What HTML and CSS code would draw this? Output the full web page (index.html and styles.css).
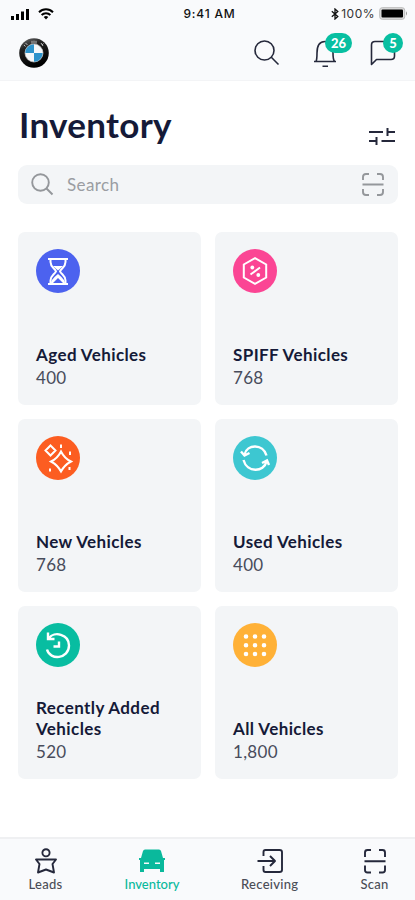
FILE: index.html
```html
<!DOCTYPE html>
<html lang="en">
<head>
    <meta charset="UTF-8">
    <meta name="viewport" content="width=device-width, initial-scale=1.0">
    <title>Inventory</title>
    <link rel="stylesheet" href="styles.css">
</head>
<body>
    <header class="header">
        <div class="status">
            <div class="signal">
                <svg width="19" height="12" viewBox="0 0 19 12"><path d="M0 8h3v4H0zM5 6h3v6H5zM10 3.500h3V12h-3zM15 1h3v11h-3z"/></svg>
                <svg width="16" height="12" viewBox="0 0 16 12" fill="none" stroke="#000" stroke-width="2"><path d="M1 4.200a10 10 0 0 1 14 0M3.600 7a6.300 6.300 0 0 1 8.800 0"/><path d="M5.700 9a3.400 3.400 0 0 1 4.600 0L8 11.500z" fill="#000" stroke="none"/></svg>
            </div>
            <span class="clock">9:41 AM</span>
            <div class="battery">
                <svg width="8" height="12" viewBox="0 0 8 12" fill="none" stroke="#111" stroke-width="1.300"><path d="M.8 3.200l6 5.300L4 11V1l2.800 2.500-6 5.300"/></svg>
                <span>100%</span>
                <svg class="cell" width="29" height="13" viewBox="0 0 29 13"><rect x=".7" y=".7" width="25" height="11.600" rx="2.500" fill="#ddd" stroke="#bbb"/><rect x="2.500" y="2.500" width="21.500" height="8" rx="1" fill="#000"/><path d="M27 4.300q2 2.200 0 4.400z" fill="#999"/></svg>
            </div>
        </div>
        <div class="toolbar">
            <svg class="logo" width="30" height="30" viewBox="0 0 30 30">
                <defs><linearGradient id="ring" x1="0" y1="0" x2=".4" y2="1"><stop offset="0" stop-color="#777"/><stop offset=".35" stop-color="#222"/><stop offset="1" stop-color="#000"/></linearGradient></defs>
                <circle cx="15" cy="15" r="14.800" fill="url(#ring)"/>
                <path d="M5 7l1.500 1.500M6.500 5l2 2M13 2.800v3M15 2.600v3M17 2.800v3M22 5l2 3M24.500 5.500L23 7" stroke="#bbb" stroke-width="1"/>
                <circle cx="15" cy="15" r="9" fill="#f5f8fa" stroke="#ccc" stroke-width=".7"/>
                <path d="M15 15V6.300A8.700 8.700 0 0 0 6.300 15zM15 15v8.700a8.700 8.700 0 0 0 8.700-8.700z" fill="#2d93cb"/>
            </svg>
            <div class="actions">
                <button class="action"><svg width="26" height="26" viewBox="0 0 26 26"><circle cx="10.500" cy="10.500" r="9.500"/><path d="M17.300 17.300l7.200 7.200"/></svg></button>
                <button class="action">
                    <svg width="26" height="28" viewBox="0 0 26 28"><path d="M2 22.500h22M4 22.500c1-2 1-4 1-8.500 0-7 2-11.500 8-11.500s8 4.500 8 11.500c0 4.500 0 6.500 1.500 8.500M10.500 27.200h5.500"/></svg>
                    <span class="badge wide">26</span>
                </button>
                <button class="action">
                    <svg width="26" height="26" viewBox="0 0 26 26"><path d="M1.500 24.500V5q0-3.500 3.500-3.500h16q3.500 0 3.500 3.500v11q0 3.500-3.500 3.500H6.500z"/></svg>
                    <span class="badge">5</span>
                </button>
            </div>
        </div>
    </header>

    <main class="content">
        <div class="title">
            <h1>Inventory</h1>
            <svg width="28" height="18" viewBox="0 0 28 18"><path d="M1 5h14M19.500 1v8M19.500 5H27M1 14h7.500M8.500 10v8M13.500 14H27"/></svg>
        </div>
        <div class="search">
            <svg width="23" height="23" viewBox="0 0 23 23"><circle cx="9.500" cy="9.500" r="8.300"/><path d="M15.500 15.500l6 6"/></svg>
            <span>Search</span>
            <svg class="scan" width="24" height="25" viewBox="0 0 24 25"><path d="M2 8V5q0-3 3-3h3M16 2h3q3 0 3 3v3M2 17v3q0 3 3 3h3M16 23h3q3 0 3-3v-3M1.500 12.500h21"/></svg>
        </div>

        <section class="cards">
            <div class="card">
                <span class="icon blue"><svg viewBox="0 0 44 44"><path d="M12 10h20M12 35h20M14.500 10v3c0 5 4 6 5.500 9.300-1.500 3.200-5.500 4.200-5.500 9.200v3M29.500 10v3c0 5-4 6-5.500 9.300 1.500 3.200 5.500 4.200 5.500 9.200v3"/><path class="fill" d="M17 17h10l-5 4.500zM15 34c.5-4 4-6 7-9 3 3 6.500 5 7 9h-2l-5-5-5 5z"/></svg></span>
                <h2>Aged Vehicles</h2>
                <p>400</p>
            </div>
            <div class="card">
                <span class="icon pink"><svg viewBox="0 0 44 44"><path d="M22 9.200l11.200 6.300v13L22 34.800l-11.200-6.300v-13zM17.500 25.500l9.500-7"/><circle class="fill" cx="19.300" cy="18.500" r="1.900"/><circle class="fill" cx="25.300" cy="26" r="1.900"/></svg></span>
                <h2>SPIFF Vehicles</h2>
                <p>768</p>
            </div>
            <div class="card">
                <span class="icon orange"><svg viewBox="0 0 44 44"><path d="M25 15.500q3.500 7 10 10-6.500 3.500-10 10-3.500-6.500-10-10 6.500-3 10-10zM14.500 9.500l5 5-5 5-5-5zM25 8.500v3.500M34 15.500v3.500M14 32.500v3M33.500 31v3"/></svg></span>
                <h2>New Vehicles</h2>
                <p>768</p>
            </div>
            <div class="card">
                <span class="icon cyan"><svg viewBox="0 0 44 44"><path class="bold" d="M11.500 18.500C14 8 30 7.500 33.500 19.500M33.500 25.500C31 36.500 14 37 10.500 24M8 15.500l3.500 4 5-2.500M36 29l-2-4.500-5 2.500"/></svg></span>
                <h2>Used Vehicles</h2>
                <p>400</p>
            </div>
            <div class="card">
                <span class="icon green"><svg viewBox="0 0 44 44"><path class="bold" d="M11 26.500C14 38 33 36 33 22.500 33 11 18 8 13 15M12 9.500V16h6.500M23 18.500v5h-5.500"/></svg></span>
                <h2>Recently Added Vehicles</h2>
                <p>520</p>
            </div>
            <div class="card">
                <span class="icon yellow"><svg viewBox="0 0 44 44"><path class="dots" d="M13 13.500h.01M22 13.500h.01M31 13.500h.01M13 22.200h.01M22 22.200h.01M31 22.200h.01M13 31h.01M22 31h.01M31 31h.01"/></svg></span>
                <h2>All Vehicles</h2>
                <p>1,800</p>
            </div>
        </section>
    </main>

    <nav class="tabs">
        <a class="tab leads">
            <svg width="24" height="26" viewBox="0 0 24 26"><circle cx="12" cy="4.800" r="3.600"/><path d="M2 11.500h20l-3.500 4.500 1.500 8.500-8-3-8 3L5.500 16z"/></svg>
            <span>Leads</span>
        </a>
        <a class="tab inventory active">
            <svg width="26" height="26" viewBox="0 0 26 26"><path fill-rule="evenodd" d="M6 1.500h14q1.500 0 2 1.500l2 7h2v2h-1v12h-4v-3H5v3H1V12H0v-2h2l2-7q.5-1.500 2-1.500zM5 14.500V16h5v-1.500zM16 14.500V16h5v-1.500z"/></svg>
            <span>Inventory</span>
        </a>
        <a class="tab receiving">
            <svg width="26" height="26" viewBox="0 0 26 26"><path d="M6.500 8V4q0-2 2-2h14q2.500 0 2.500 2v18q0 2-2.500 2h-14q-2 0-2-2v-4M.5 13h17M13 8l5 5-5 5"/></svg>
            <span>Receiving</span>
        </a>
        <a class="tab scanner">
            <svg width="24" height="26" viewBox="0 0 24 26"><path d="M2 9V4.500q0-2.500 2.500-2.500H8M16 2h3.500Q22 2 22 4.500V9M2 17.500V22q0 2.500 2.500 2.500H8M16 24.500h3.500q2.500 0 2.500-2.500v-4.500M1.500 13.200h21"/></svg>
            <span>Scan</span>
        </a>
    </nav>
</body>
</html>
```
FILE: styles.css
```css
*{box-sizing: border-box;}
body,h1,h2,p,button{margin: 0; padding: 0;}
body{
    height: 900px; overflow: hidden; display: flex; flex-direction: column;
    background: #fff; color: #151a38; font-family: Lato, "Noto Sans", sans-serif;
}
button{border: none; background: transparent; font-family: inherit;}
svg{display: block; flex: none;}

.header{height: 81px; background: #f9fafc; border-bottom: 1px solid #f3f4f6;}
.status{
    height: 26px; padding: 1px 7px 0 11px;
    display: grid; grid-template-columns: 1fr auto 1fr; align-items: center;
    font-family: Inter, sans-serif; font-size: 12px; color: #111;
}
.signal{display: flex; gap: 8px;}
.clock{font-weight: 500; letter-spacing: .8px;}
.battery{display: flex; align-items: center; justify-content: flex-end;}
.battery>span{margin: 0 4px 0 2px; letter-spacing: .5px; color: #333;}
.toolbar{
    height: 54px; padding: 0 19px;
    display: flex; justify-content: space-between; align-items: center;
}
.actions{display: flex; gap: 32px;}
.action{position: relative; height: 28px;}
.action>svg,.title>svg,.search>svg,.tab>svg{fill: none; stroke: #25283b; stroke-width: 1.6; stroke-linejoin: round;}
.badge{
    position: absolute; left: 13px; top: -6px; height: 20px; min-width: 20px; border-radius: 10px;
    background: #08bfa1; color: #fff; font-size: 13px; line-height: 20px; font-weight: 900; text-align: center;
}
.badge.wide{width: 27px;}

.content{flex: 1; padding: 0 17px 0 18px;}
.title{height: 84px; display: flex; justify-content: space-between; padding: 22px 2px 0 1px;}
.title h1{font-size: 35px; line-height: 42px; font-weight: 700; letter-spacing: .3px;}
.title>svg{margin-top: 24px; stroke-width: 2;}
.search{
    height: 39px; padding: 0 13px; border-radius: 9px;
    display: flex; align-items: center; background: #f3f5f7;
    color: #9a9da2; font-size: 17px;
}
.search>span{flex: 1; margin-left: 13px; letter-spacing: .4px;}
.search>svg{stroke: #94979b; stroke-width: 1.9;}

.cards{
    margin-top: 28px; display: grid; grid-template-columns: 183px 183px;
    grid-auto-rows: 173px; gap: 14px;
}
.card{
    padding: 17px 18px 15px; border-radius: 7px; background: #f3f5f7;
    display: flex; flex-direction: column;
}
.icon{width: 44px; height: 44px; margin-bottom: auto; border-radius: 50%;}
.icon path,.icon circle{fill: none; stroke: #fff; stroke-width: 2;}
.icon .fill{fill: #fff; stroke: none;}
.icon .bold{stroke-width: 2.4;}
.icon .dots{stroke-width: 4.6; stroke-linecap: round;}
.blue{background: #4c62ef;}
.pink{background: #fb4594;}
.orange{background: #fc5d21;}
.cyan{background: #3dc7d1;}
.green{background: #08bda1;}
.yellow{background: #ffb137;}
.card h2{font-size: 17px; line-height: 21px; font-weight: 700; letter-spacing: .4px;}
.card p{font-size: 17px; line-height: 25px; letter-spacing: .3px; color: #484c5b;}

.tabs{
    height: 63px; padding: 9px 26px 0 28px; background: #f9fafc; border-top: 2px solid #eff0f2;
    display: flex; justify-content: space-between;
}
.tab{display: flex; flex-direction: column; align-items: center; color: #4b4d57; font-size: 13px; line-height: 18px;}
.tab>span{margin-top: 1px; font-weight: 500; letter-spacing: .3px;}
.tab>svg{stroke-width: 1.9;}
.leads{width: 35px;}
.scanner{width: 29px;}
.active{color: #0ab99c;}
.active>span{letter-spacing: 0;}
.active>svg{fill: #0ab99c; stroke: none;}
```
